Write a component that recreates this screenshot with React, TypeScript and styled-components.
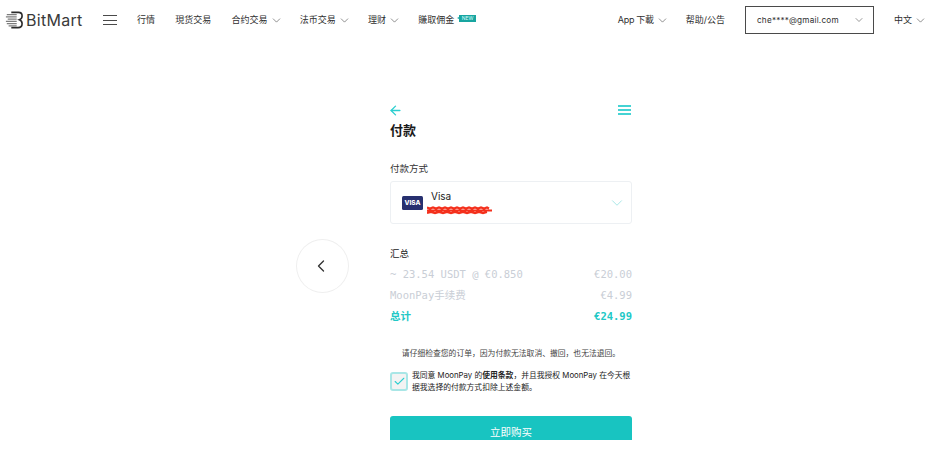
import React from 'react'
import styled, { createGlobalStyle } from 'styled-components'
import { ChevronDown, ChevronLeft, ArrowLeft, Check } from 'lucide-react'

const sans = `Inter, "Noto Sans CJK SC", sans-serif`

const GlobalStyle = createGlobalStyle`
  html, body {
    margin: 0;
    padding: 0;
    background: #fff;
    overflow: hidden;
    font-family: ${sans};
    color: #1c1c1c;
  }
`

const navItems = [
  { label: '行情' },
  { label: '現货交易' },
  { label: '合约交易', arrow: true },
  { label: '法币交易', arrow: true },
  { label: '理财', arrow: true },
]

const App: React.FC = () => {
  return (
    <Page>
      <GlobalStyle />
      <Header>
        <Logo>
          <svg width="18" height="20" viewBox="0 0 20 21" fill="none">
            <path d="M7 2h8c3 0 4 1.500 4 4 0 2-1 3.500-3 4.300 2 .7 3 2.200 3 4.400 0 2.800-1.500 4.300-4.500 4.300H7" stroke="#2b2b2b" strokeWidth="1.800" />
            <path d="M2 4.500h11M1 7h12M3 9.500h10M1 12h12M2 14.500h11M4 17h9" stroke="#7d7d7d" strokeWidth="1.300" />
          </svg>
          <LogoText>BitMart</LogoText>
        </Logo>
        <Burger>
          <span />
          <span />
          <span />
        </Burger>
        <Nav>
          {navItems.map((item) => (
            <NavItem key={item.label}>
              {item.label}
              {item.arrow && <ChevronDown size={13} strokeWidth={1} />}
            </NavItem>
          ))}
          <NavItem>
            賺取佣金
            <NewBadge>NEW</NewBadge>
          </NavItem>
        </Nav>
        <HeaderRight>
          <DownloadItem>
            App 下載
            <ChevronDown size={13} strokeWidth={1} />
          </DownloadItem>
          <NavItem>帮助/公告</NavItem>
          <Account>
            che****@gmail.com
            <ChevronDown size={12} strokeWidth={1} />
          </Account>
          <NavItem>
            中文
            <ChevronDown size={13} strokeWidth={1} />
          </NavItem>
        </HeaderRight>
      </Header>

      <Main>
        <PrevSlot>
          <PrevButton>
            <ChevronLeft size={20} strokeWidth={1.6} />
          </PrevButton>
        </PrevSlot>
        <Widget>
          <TopRow>
            <BackArrow>
              <ArrowLeft size={15} strokeWidth={2.2} color="#2ccfd0" />
            </BackArrow>
            <MenuIcon>
              <span />
              <span />
              <span />
            </MenuIcon>
          </TopRow>
          <Title>付款</Title>
          <FieldLabel>付款方式</FieldLabel>
          <PaySelect>
            <VisaMark>VISA</VisaMark>
            <PayText>
              <PayName>Visa</PayName>
              <svg width="65" height="9" viewBox="0 0 65 9">
                <path
                  d="M0 1.500l3 1 3-1 3 1 3-1 3 1 3-1 3 1 3-1 3 1 3-1 3 1 3-1 3 1 3-1 3 1 3-1 3 1 3-1 3 1 3-1 2 1M0 4.500h65M0 7l4-1 4 1 4-1 4 1 4-1 4 1 4-1 4 1 4-1 4 1 4-1 4 1 4-1 4 1 4-1"
                  stroke="#f4301c"
                  strokeWidth="2.200"
                  fill="none"
                />
              </svg>
            </PayText>
            <SelectArrow>
              <ChevronDown size={18} strokeWidth={1.3} color="#a8e6e6" />
            </SelectArrow>
          </PaySelect>

          <SummaryTitle>汇总</SummaryTitle>
          <SummaryRow>
            <span>~ 23.54 USDT @ €0.850</span>
            <span>€20.00</span>
          </SummaryRow>
          <SummaryRow>
            <span>MoonPay手续费</span>
            <span>€4.99</span>
          </SummaryRow>
          <SummaryRow $total>
            <span>总计</span>
            <span>€24.99</span>
          </SummaryRow>

          <Notice>请仔细检查您的订单，因为付款无法取消、撤回，也无法退回。</Notice>
          <Agree>
            <CheckBox>
              <Check size={13} strokeWidth={2} color="#2ccfd0" />
            </CheckBox>
            <AgreeText>
              我同意 MoonPay 的<strong>使用条款</strong>，并且我授权 MoonPay 在今天根据我选择的付款方式扣除上述金额。
            </AgreeText>
          </Agree>
          <ButtonClip>
            <BuyButton>立即购买</BuyButton>
          </ButtonClip>
        </Widget>
      </Main>
    </Page>
  )
}

const Page = styled.div`
  width: 936px;
  height: 468px;
  overflow: hidden;
  background: #fff;
`

const Header = styled.header`
  height: 40px;
  display: flex;
  align-items: center;
  padding: 0 12px 0 5px;
`

const Logo = styled.div`
  display: flex;
  align-items: center;
  gap: 3px;
  width: 98px;
`

const LogoText = styled.span`
  font-size: 16px;
  letter-spacing: 0.300px;
  color: #3a3a3a;
`

const Burger = styled.div`
  width: 14px;
  display: flex;
  flex-direction: column;
  gap: 3.500px;

  span {
    height: 1px;
    background: #4a4a4a;
  }
`

const Nav = styled.nav`
  display: flex;
  align-items: center;
  gap: 20.250px;
  margin-left: 20px;
`

const NavItem = styled.div`
  display: flex;
  align-items: center;
  gap: 2px;
  font-size: 9px;
  line-height: 12px;
  color: #2f2f2f;
  white-space: nowrap;

  svg {
    color: #333;
    margin-right: -3px;
  }
`

const DownloadItem = styled(NavItem)`
  letter-spacing: -0.300px;
`

const NewBadge = styled.span`
  position: relative;
  margin-left: 3px;
  margin-bottom: 3px;
  background: #18a5a0;
  color: #dff;
  font-size: 5px;
  line-height: 7px;
  padding: 0 2.500px;

  &::before {
    content: '';
    position: absolute;
    left: -2px;
    top: 2px;
    border-style: solid;
    border-width: 1.500px 2px 1.500px 0;
    border-color: transparent #18a5a0 transparent transparent;
  }
`

const HeaderRight = styled.div`
  display: flex;
  align-items: center;
  gap: 20px;
  margin-left: auto;
`

const Account = styled.div`
  width: 129px;
  height: 28px;
  box-sizing: border-box;
  border: 1px solid #4a4a4a;
  display: flex;
  align-items: center;
  justify-content: space-between;
  padding: 0 11px;
  font-size: 8.200px;
  letter-spacing: 0.200px;
  color: #2f2f2f;

  svg {
    color: #333;
    margin-right: -3px;
  }
`

const Main = styled.main`
  display: flex;
  align-items: flex-start;
  padding-left: 296px;
`

const PrevSlot = styled.div`
  width: 94px;
  padding-top: 199px;
`

const PrevButton = styled.div`
  width: 53px;
  height: 54px;
  box-sizing: border-box;
  border: 1px solid #efefef;
  border-radius: 50%;
  display: flex;
  align-items: center;
  justify-content: center;
  color: #333;

  svg {
    margin-left: -3px;
  }
`

const Widget = styled.section`
  width: 242px;
  padding-top: 63px;
`

const TopRow = styled.div`
  display: flex;
  align-items: center;
  justify-content: space-between;
  height: 14px;
`

const BackArrow = styled.div`
  display: flex;
  margin-left: -2px;
`

const MenuIcon = styled.div`
  width: 13px;
  margin-right: 1px;
  display: flex;
  flex-direction: column;
  gap: 2px;

  span {
    height: 2px;
    background: #45d3d4;
  }
`

const Title = styled.h1`
  margin: 3px 0 0;
  font-size: 13px;
  line-height: 20px;
  font-weight: 700;
  color: #1a1a1a;
`

const FieldLabel = styled.div`
  margin-top: 22px;
  font-size: 9.500px;
  line-height: 14px;
  color: #333;
`

const PaySelect = styled.div`
  margin-top: 5px;
  height: 43px;
  box-sizing: border-box;
  border: 1px solid #edf0f3;
  border-radius: 3px;
  display: flex;
  align-items: center;
  padding: 0 11px;
`

const VisaMark = styled.div`
  width: 21px;
  height: 14px;
  border-radius: 1.500px;
  background: #27306f;
  color: #fff;
  font-size: 6.500px;
  line-height: 14px;
  font-weight: 800;
  text-align: center;
`

const PayText = styled.div`
  margin-left: 4px;
  display: flex;
  flex-direction: column;
  svg {
    display: block;
  }
`

const PayName = styled.div`
  margin-left: 4px;
  margin-bottom: 3px;
  font-size: 10px;
  line-height: 13px;
  color: #222;
`

const SelectArrow = styled.div`
  margin-left: auto;
  display: flex;
  margin-right: -6px;
`

const SummaryTitle = styled.div`
  margin-top: 24px;
  font-size: 9.500px;
  line-height: 12px;
  color: #222;
`

const SummaryRow = styled.div<{ $total?: boolean }>`
  margin-top: 7px;
  display: flex;
  justify-content: space-between;
  font-family: "DejaVu Sans Mono", "Noto Sans CJK SC", monospace;
  font-size: 10.500px;
  line-height: 14px;
  font-weight: ${(p) => (p.$total ? 700 : 400)};
  color: ${(p) => (p.$total ? '#22c8c6' : '#c9ced6')};
`

const Notice = styled.p`
  margin: 24px 0 0;
  font-size: 7.800px;
  line-height: 12px;
  text-align: center;
  color: #444;
`

const Agree = styled.div`
  margin-top: 10px;
  display: flex;
  align-items: flex-start;
  gap: 4px;
`

const CheckBox = styled.div`
  flex: none;
  margin-top: 3px;
  width: 18px;
  height: 19px;
  box-sizing: border-box;
  border: 2.500px solid #a9e6e6;
  border-radius: 3px;
  background: #f3f3f3;
  display: flex;
  align-items: center;
  justify-content: center;
`

const AgreeText = styled.div`
  font-size: 7.800px;
  line-height: 12px;
  color: #222;

  strong {
    font-weight: 700;
  }
`

const ButtonClip = styled.div`
  margin-top: 23px;
  height: 24px;
  overflow: hidden;
`

const BuyButton = styled.button`
  display: block;
  width: 100%;
  height: 31px;
  border: 0;
  border-radius: 3px;
  background: #18c4c1;
  color: #fff;
  font-family: ${sans};
  font-size: 10.500px;
`

export default App
